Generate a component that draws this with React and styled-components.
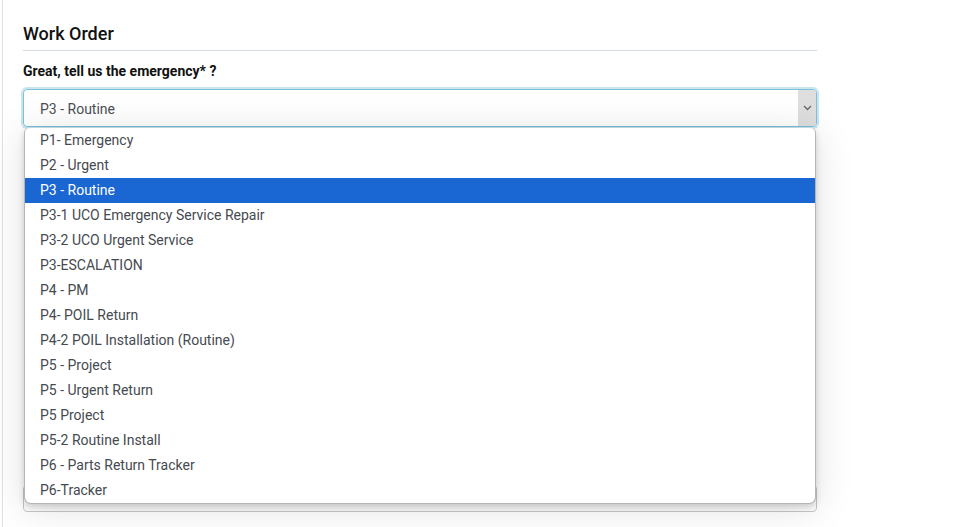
import React from "react";
import styled, { createGlobalStyle } from "styled-components";

const Global = createGlobalStyle`
  html, body { margin: 0; padding: 0; background: #fff; }
  body { font-family: Roboto, "Liberation Sans", Arial, sans-serif; }
`;

const Page = styled.div`
  position: relative;
  width: 973px;
  height: 527px;
  overflow: hidden;
  background: #fff;
`;

const Frame = styled.div`
  margin-left: 2px;
  border-left: 1px solid #e2e2e2;
  height: 527px;
  padding: 21px 0 0 20px;
  box-sizing: border-box;
`;

const Form = styled.div`
  width: 794px;
  display: flex;
  flex-direction: column;
`;

const Title = styled.h2`
  margin: 0;
  font-size: 18px;
  font-weight: 500;
  color: #111;
  line-height: 26px;
  padding-bottom: 3px;
  border-bottom: 1px solid #d5dde2;
`;

const Label = styled.label`
  margin-top: 11px;
  font-size: 14px;
  font-weight: 700;
  color: #111;
  line-height: 18px;
`;

const SelectWrap = styled.div`
  position: relative;
  margin-top: 9px;
`;

const SelectBox = styled.div`
  height: 38px;
  box-sizing: border-box;
  border: 1px solid #7cc1dc;
  border-radius: 4px;
  box-shadow: 0 0 0 2px rgba(160, 207, 226, 0.55);
  display: flex;
  align-items: center;
  overflow: hidden;
`;

const SelectValue = styled.span`
  flex: 1;
  padding: 2px 0 0 16px;
  font-size: 14px;
  color: #4a4f55;
`;

const Arrow = styled.span`
  width: 18px;
  align-self: stretch;
  background: #dedede;
  display: flex;
  align-items: center;
  justify-content: center;
`;

const Ghost = styled.div`
  margin: ${(p) => p.$mt}px ${(p) => (p.$inset ? 3 : 0)}px 0;
  height: ${(p) => p.$h}px;
  border: 1px solid #c9c9c9;
  border-radius: 4px;
  box-sizing: border-box;
`;

const List = styled.ul`
  position: absolute;
  left: 1px;
  right: 1px;
  top: 39px;
  margin: 0;
  padding: 0;
  list-style: none;
  background: #fff;
  border: 1px solid #b5b5b5;
  border-top: none;
  border-radius: 5px 5px 7px 7px;
  box-shadow: 0 4px 38px rgba(0, 0, 0, 0.13), 0 3px 6px rgba(0, 0, 0, 0.16);
  z-index: 5;
`;

const Item = styled.li`
  height: 25px;
  line-height: 25px;
  padding-left: 15px;
  font-size: 14px;
  color: ${(p) => (p.$active ? "#fff" : "#454a50")};
  background: ${(p) => (p.$active ? "#1a67d3" : "transparent")};
  white-space: nowrap;
`;

const options = [
  "P1- Emergency",
  "P2 - Urgent",
  "P3 - Routine",
  "P3-1 UCO Emergency Service Repair",
  "P3-2 UCO Urgent Service",
  "P3-ESCALATION",
  "P4 - PM",
  "P4- POIL Return",
  "P4-2 POIL Installation (Routine)",
  "P5 - Project",
  "P5 - Urgent Return",
  "P5 Project",
  "P5-2 Routine Install",
  "P6 - Parts Return Tracker",
  "P6-Tracker",
];

export default function App() {
  return (
    <Page>
      <Global />
      <Frame>
        <Form>
          <Title>Work Order</Title>
          <Label>Great, tell us the emergency* ?</Label>
          <SelectWrap>
            <SelectBox>
              <SelectValue>P3 - Routine</SelectValue>
              <Arrow>
                <svg width="9" height="6" viewBox="0 0 9 6">
                  <path d="M1 1 L4.5 4.5 L8 1" fill="none" stroke="#666" strokeWidth="1.3" />
                </svg>
              </Arrow>
            </SelectBox>
            <List>
              {options.map((o) => (
                <Item key={o} $active={o === "P3 - Routine"}>
                  {o}
                </Item>
              ))}
            </List>
          </SelectWrap>
          <Ghost $inset $mt={40} $h={38} />
          <Ghost $inset $mt={40} $h={38} />
          <Ghost $inset $mt={40} $h={38} />
          <Ghost $mt={124} $h={27} />
        </Form>
      </Frame>
    </Page>
  );
}
